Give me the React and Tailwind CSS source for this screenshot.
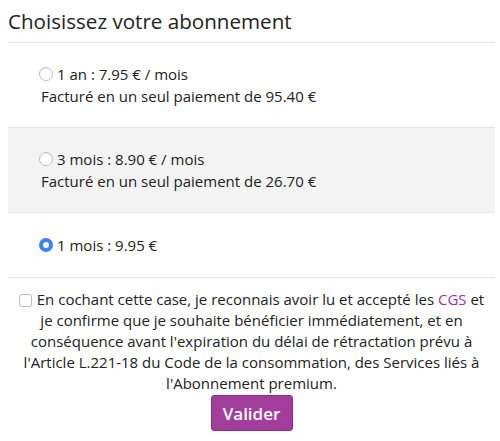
import React, { useState } from 'react';

const plans = [
    { id: 'year', label: '1 an : 7.95 € / mois', billed: 'Facturé en un seul paiement de 95.40 €' },
    { id: 'quarter', label: '3 mois : 8.90 € / mois', billed: 'Facturé en un seul paiement de 26.70 €' },
    { id: 'month', label: '1 mois : 9.95 €' },
];

function App() {
    const [plan, setPlan] = useState('month');
    const [accepted, setAccepted] = useState(false);

    return (
        <div className="min-h-screen bg-white text-[#222] pl-2 pr-[5px]" style={{ fontFamily: '"Open Sans", sans-serif' }}>
            <h1 className="text-[20.6px] leading-[42px] border-b border-[#e3e3e3]">Choisissez votre abonnement</h1>
            {plans.map((p, i) => (
                <div
                    key={p.id}
                    className={`border-b border-[#e3e3e3] pl-[31px] text-[15px] leading-[22px] ${i === 1 ? 'bg-[#f3f3f3]' : ''} ${p.billed ? 'py-[20px]' : 'py-[21px]'}`}
                >
                    <label className="flex items-center">
                        <input
                            type="radio"
                            name="plan"
                            checked={plan === p.id}
                            onChange={() => setPlan(p.id)}
                            className="appearance-none w-[14px] h-[14px] m-0 mr-[4px] rounded-full border border-[#bdbdbd] bg-white shadow-[inset_0_1px_1px_rgba(0,0,0,0.08)] checked:border-[4px] checked:border-[#3b82f6]"
                        />
                        <span>{p.label}</span>
                    </label>
                    {p.billed && <div className="pl-[2px]">{p.billed}</div>}
                </div>
            ))}
            <div className="pt-[11px] text-center text-[15px] leading-[21px] px-[9px]">
                <label>
                    <input
                        type="checkbox"
                        checked={accepted}
                        onChange={e => setAccepted(e.target.checked)}
                        className="appearance-none w-[13px] h-[13px] align-[-2px] mr-[5px] rounded-[3px] border border-[#bdbdbd] bg-white checked:bg-[#3b82f6] checked:border-[#3b82f6]"
                    />
                    En cochant cette case, je reconnais avoir lu et accepté les <a href="#" className="text-[#993399]">CGS</a> et je confirme que je souhaite bénéficier immédiatement, et en conséquence avant l'expiration du délai de rétractation prévu à l'Article L.221-18 du Code de la consommation, des Services liés à l'Abonnement premium.
                </label>
                <div className="mt-[1px]">
                    <button className="bg-[#a23d9c] border border-[#8d2c87] rounded-[3px] text-white text-[17px] font-semibold w-[82px] h-[36px]">
                        Valider
                    </button>
                </div>
            </div>
        </div>
    );
}

export default App;
